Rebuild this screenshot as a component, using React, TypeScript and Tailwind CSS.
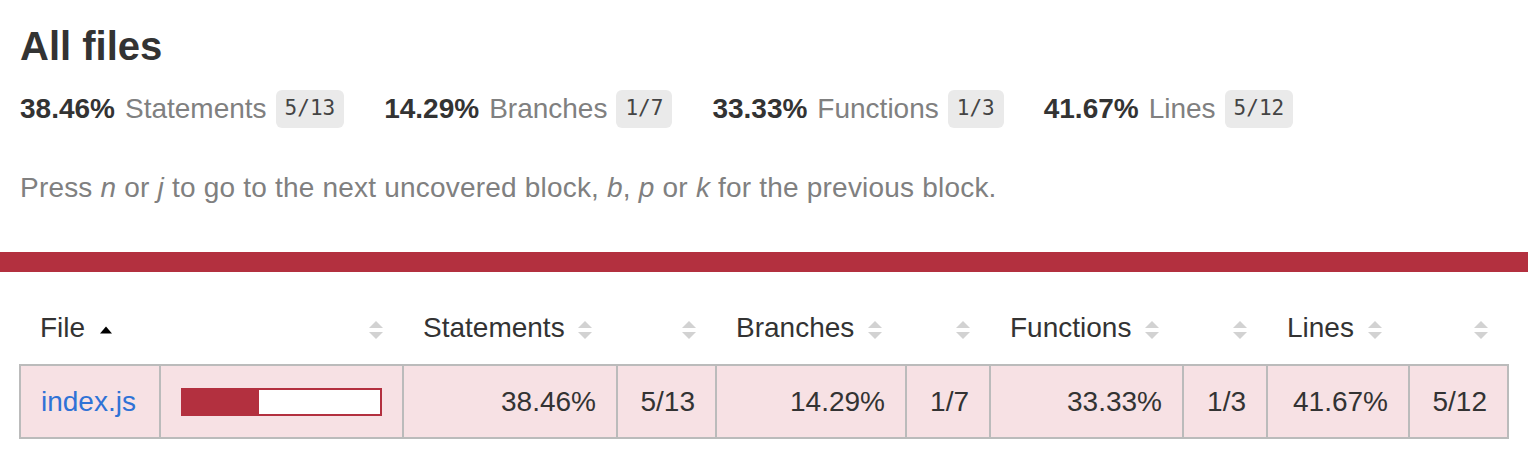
import React from "react";

const RED = "#b3303f";

const stats = [
  { pct: "38.46%", label: "Statements", frac: "5/13" },
  { pct: "14.29%", label: "Branches", frac: "1/7" },
  { pct: "33.33%", label: "Functions", frac: "1/3" },
  { pct: "41.67%", label: "Lines", frac: "5/12" },
];

function Sorter() {
  return (
    <svg width="14" height="20" viewBox="0 0 14 20" className="inline-block align-middle">
      <path d="M7 1 L14 8 L0 8 Z" fill="#d2d2d2" />
      <path d="M0 12 L14 12 L7 19 Z" fill="#d2d2d2" />
    </svg>
  );
}

function AscArrow() {
  return (
    <svg width="14" height="10" viewBox="0 0 14 10" className="inline-block align-middle">
      <path d="M7 1.5 L13 8.5 L1 8.5 Z" fill="#000" />
    </svg>
  );
}

export default function App() {
  return (
    <div className="w-[1528px] h-[462px] overflow-hidden bg-white text-[#333] font-['Liberation_Sans',Arial,sans-serif]">
      {/* summary */}
      <div className="px-5 pt-[22px]">
        <h1 className="text-[40px] leading-[48px] font-bold">All files</h1>

        <div className="mt-[20px] flex items-center h-[38px]">
          {stats.map((s) => (
            <div key={s.label} className="flex items-center mr-10">
              <span className="text-[28px] leading-[38px] font-bold">{s.pct}</span>
              <span className="ml-[10px] text-[28px] leading-[38px] text-[#808080]">{s.label}</span>
              <span className="ml-[9px] h-[38px] px-[9px] flex items-center rounded-[6px] bg-[#eaeaea] text-[#444] text-[21px] font-['DejaVu_Sans_Mono',monospace]">
                {s.frac}
              </span>
            </div>
          ))}
        </div>

        <p className="mt-[42px] text-[28px] leading-[36px] tracking-[0.2px] text-[#808080]">
          Press <em>n</em> or <em>j</em> to go to the next uncovered block, <em>b</em>, <em>p</em> or{" "}
          <em>k</em> for the previous block.
        </p>
      </div>

      <div className="mt-[46px] h-[20px]" style={{ backgroundColor: RED }} />

      {/* file table */}
      <div className="px-[19px] mt-[20px]">
        <table className="table-fixed border-collapse w-[1488px] text-[28px]">
          <colgroup>
            <col className="w-[140px]" />
            <col className="w-[243px]" />
            <col className="w-[214px]" />
            <col className="w-[99px]" />
            <col className="w-[190px]" />
            <col className="w-[84px]" />
            <col className="w-[193px]" />
            <col className="w-[84px]" />
            <col className="w-[142px]" />
            <col className="w-[99px]" />
          </colgroup>
          <thead>
            <tr className="h-[73px]">
              <th className="text-left font-normal pl-5 whitespace-nowrap">
                File <span className="ml-[6px]"><AscArrow /></span>
              </th>
              <th className="text-right font-normal pr-5"><Sorter /></th>
              <th className="text-left font-normal pl-5 whitespace-nowrap">
                Statements <span className="ml-[6px]"><Sorter /></span>
              </th>
              <th className="text-right font-normal pr-5"><Sorter /></th>
              <th className="text-left font-normal pl-5 whitespace-nowrap">
                Branches <span className="ml-[6px]"><Sorter /></span>
              </th>
              <th className="text-right font-normal pr-5"><Sorter /></th>
              <th className="text-left font-normal pl-5 whitespace-nowrap">
                Functions <span className="ml-[6px]"><Sorter /></span>
              </th>
              <th className="text-right font-normal pr-5"><Sorter /></th>
              <th className="text-left font-normal pl-5 whitespace-nowrap">
                Lines <span className="ml-[6px]"><Sorter /></span>
              </th>
              <th className="text-right font-normal pr-5"><Sorter /></th>
            </tr>
          </thead>
          <tbody>
            <tr className="h-[73px] bg-[#f7e1e4]">
              <td className="border-2 border-[#bbb] pl-5 text-left">
                <a className="text-[#2f72d6]">index.js</a>
              </td>
              <td className="border-2 border-[#bbb] px-5">
                <div className="h-[28px] w-[201px] border-2 bg-white" style={{ borderColor: RED }}>
                  <div className="h-full" style={{ width: "38.46%", backgroundColor: RED }} />
                </div>
              </td>
              <td className="border-2 border-[#bbb] pr-5 text-right">38.46%</td>
              <td className="border-2 border-[#bbb] pr-5 text-right">5/13</td>
              <td className="border-2 border-[#bbb] pr-5 text-right">14.29%</td>
              <td className="border-2 border-[#bbb] pr-5 text-right">1/7</td>
              <td className="border-2 border-[#bbb] pr-5 text-right">33.33%</td>
              <td className="border-2 border-[#bbb] pr-5 text-right">1/3</td>
              <td className="border-2 border-[#bbb] pr-5 text-right">41.67%</td>
              <td className="border-2 border-[#bbb] pr-5 text-right">5/12</td>
            </tr>
          </tbody>
        </table>
      </div>
    </div>
  );
}
